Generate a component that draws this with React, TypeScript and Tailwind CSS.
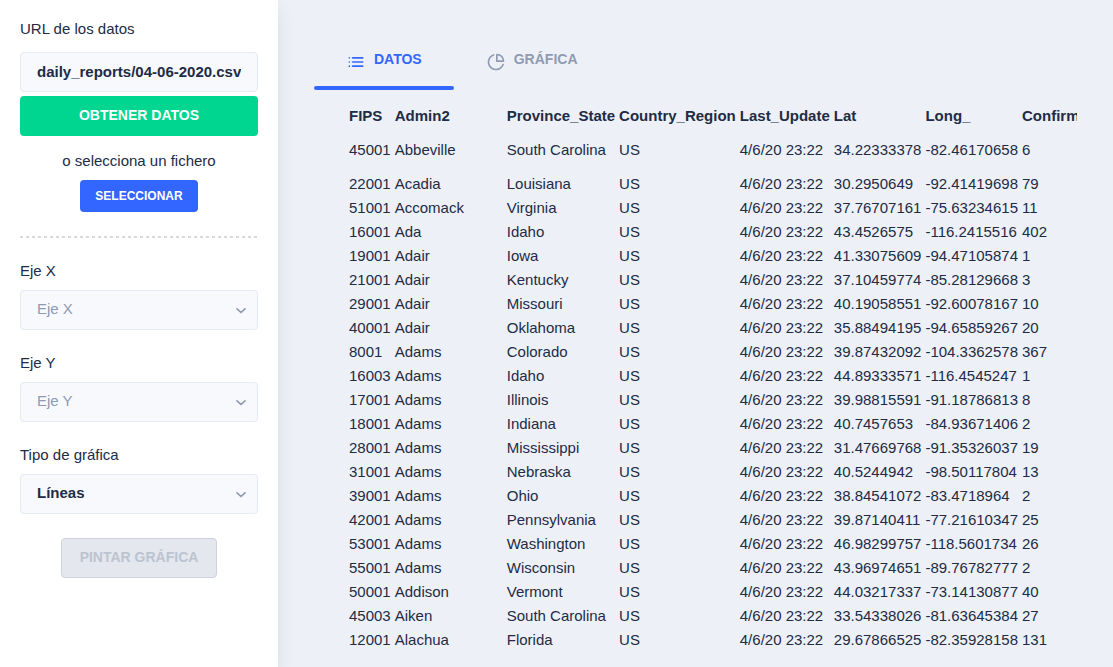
import { useState } from "react";
import type { ReactNode } from "react";

const headers = ["FIPS", "Admin2", "Province_State", "Country_Region", "Last_Update", "Lat", "Long_", "Confirmed"];

const records: string[][] = [
  ["45001", "Abbeville", "South Carolina", "34.22333378", "-82.46170658", "6"],
  ["22001", "Acadia", "Louisiana", "30.2950649", "-92.41419698", "79"],
  ["51001", "Accomack", "Virginia", "37.76707161", "-75.63234615", "11"],
  ["16001", "Ada", "Idaho", "43.4526575", "-116.2415516", "402"],
  ["19001", "Adair", "Iowa", "41.33075609", "-94.47105874", "1"],
  ["21001", "Adair", "Kentucky", "37.10459774", "-85.28129668", "3"],
  ["29001", "Adair", "Missouri", "40.19058551", "-92.60078167", "10"],
  ["40001", "Adair", "Oklahoma", "35.88494195", "-94.65859267", "20"],
  ["8001", "Adams", "Colorado", "39.87432092", "-104.3362578", "367"],
  ["16003", "Adams", "Idaho", "44.89333571", "-116.4545247", "1"],
  ["17001", "Adams", "Illinois", "39.98815591", "-91.18786813", "8"],
  ["18001", "Adams", "Indiana", "40.7457653", "-84.93671406", "2"],
  ["28001", "Adams", "Mississippi", "31.47669768", "-91.35326037", "19"],
  ["31001", "Adams", "Nebraska", "40.5244942", "-98.50117804", "13"],
  ["39001", "Adams", "Ohio", "38.84541072", "-83.4718964", "2"],
  ["42001", "Adams", "Pennsylvania", "39.87140411", "-77.21610347", "25"],
  ["53001", "Adams", "Washington", "46.98299757", "-118.5601734", "26"],
  ["55001", "Adams", "Wisconsin", "43.96974651", "-89.76782777", "2"],
  ["50001", "Addison", "Vermont", "44.03217337", "-73.14130877", "40"],
  ["45003", "Aiken", "South Carolina", "33.54338026", "-81.63645384", "27"],
  ["12001", "Alachua", "Florida", "29.67866525", "-82.35928158", "131"],
];

const rows = records.map(([fips, admin, state, lat, long, confirmed]) => [
  fips,
  admin,
  state,
  "US",
  "4/6/20 23:22",
  lat,
  long,
  confirmed,
]);

function ListIcon() {
  return (
    <svg className="size-5 shrink-0" viewBox="0 0 24 24" fill="currentColor" aria-hidden="true">
      <circle cx="4" cy="7" r="1" />
      <circle cx="4" cy="12" r="1" />
      <circle cx="4" cy="17" r="1" />
      <rect x="7" y="11" width="14" height="2" rx=".94" />
      <rect x="7" y="16" width="14" height="2" rx=".94" />
      <rect x="7" y="6" width="14" height="2" rx=".94" />
    </svg>
  );
}

function PieIcon() {
  return (
    <svg className="size-5 shrink-0" viewBox="0 0 24 24" fill="currentColor" aria-hidden="true">
      <path d="M13 2a1 1 0 0 0-1 1v8a1 1 0 0 0 1 1h8a1 1 0 0 0 1-1 9 9 0 0 0-9-9zm1 8V4.07A7 7 0 0 1 19.93 10z" />
      <path d="M20.82 14.06a1 1 0 0 0-1.28.61A8 8 0 1 1 9.33 4.46a1 1 0 0 0-.66-1.89 10 10 0 1 0 12.76 12.76 1 1 0 0 0-.61-1.27z" />
    </svg>
  );
}

function SelectField({ id, label, muted, options }: { id: string; label: string; muted?: boolean; options: string[] }) {
  return (
    <div className="flex flex-col gap-[9px]">
      <label htmlFor={id}>{label}</label>
      <div className="relative">
        <select
          id={id}
          className={`block h-10 w-full appearance-none rounded border border-[#e4e9f2] bg-[#f7f9fc] pr-10 pb-0.5 pl-4 ${
            muted ? "text-[#8f9bb3]" : "font-bold text-[#222b45]"
          }`}
        >
          {options.map((option) => (
            <option key={option}>{option}</option>
          ))}
        </select>
        <svg
          className="pointer-events-none absolute top-4 right-3 h-[9px] w-2.5 text-[#8f9bb3]"
          viewBox="0 0 10 9"
          fill="none"
          stroke="currentColor"
          strokeWidth="1.7"
          strokeLinecap="round"
          strokeLinejoin="round"
          aria-hidden="true"
        >
          <path d="M1 2.8l4 3.7 4-3.7" />
        </svg>
      </div>
    </div>
  );
}

function Tab({ active, onClick, icon, children }: { active: boolean; onClick: () => void; icon: ReactNode; children: ReactNode }) {
  return (
    <button
      type="button"
      role="tab"
      aria-selected={active}
      onClick={onClick}
      className={`flex flex-col ${active ? "text-[#3366ff]" : "text-[#8f9bb3]"}`}
    >
      <span className="flex items-start gap-2 px-8 pb-[14px] text-sm/[14px] font-bold">
        {icon}
        {children}
      </span>
      <span className={`h-1 w-full rounded ${active ? "bg-[#3366ff]" : ""}`} />
    </button>
  );
}

export default function App() {
  const [url, setUrl] = useState("daily_reports/04-06-2020.csv");
  const [tab, setTab] = useState("datos");

  return (
    <div className="flex h-screen overflow-hidden bg-[#edf1f7] font-['Liberation_Sans',Arial,sans-serif] text-[15px]/[20px] text-[#222b45]">
      <aside className="z-10 w-[278px] shrink-0 bg-white px-5 pt-[19px] shadow-[0_8px_16px_0_rgba(44,51,73,0.1)]">
        <label htmlFor="url" className="block">
          URL de los datos
        </label>
        <input
          id="url"
          type="text"
          value={url}
          onChange={(event) => setUrl(event.target.value)}
          className="mt-[13px] block h-10 w-full rounded border border-[#e4e9f2] bg-[#f7f9fc] px-4 pb-0.5 font-bold"
        />
        <button type="button" className="mt-1 h-10 w-full rounded bg-[#00d68f] pb-0.5 text-sm font-bold text-white">
          OBTENER DATOS
        </button>
        <div className="mt-[15px] flex flex-col items-center gap-[9px]">
          <p>o selecciona un fichero</p>
          <button type="button" className="h-8 rounded bg-[#3366ff] px-[15px] text-xs font-bold text-white">
            SELECCIONAR
          </button>
        </div>
        <div className="mt-6 h-0.5 bg-[repeating-linear-gradient(90deg,#d9d9d9_0_3px,transparent_3px_6px)]" />
        <form className="mt-[23px] flex flex-col gap-6" onSubmit={(event) => event.preventDefault()}>
          <div className="flex flex-col gap-[23px]">
            <SelectField id="eje-x" label="Eje X" muted options={["Eje X"]} />
            <SelectField id="eje-y" label="Eje Y" muted options={["Eje Y"]} />
            <SelectField id="tipo" label="Tipo de gráfica" options={["Líneas"]} />
          </div>
          <button
            type="submit"
            disabled
            className="h-10 self-center rounded border border-[#cdd2dc] bg-[#e4e7ed] px-[18px] pb-0.5 text-sm font-bold text-[#bcc3d1]"
          >
            PINTAR GRÁFICA
          </button>
        </form>
      </aside>

      <main className="min-w-0 flex-1 px-9 pt-[52px]">
        <div role="tablist" className="flex">
          <Tab active={tab === "datos"} onClick={() => setTab("datos")} icon={<ListIcon />}>
            DATOS
          </Tab>
          <Tab active={tab === "grafica"} onClick={() => setTab("grafica")} icon={<PieIcon />}>
            GRÁFICA
          </Tab>
        </div>
        <div className="overflow-hidden pt-[13px] pl-8">
          <table className="border-separate border-spacing-0.5 text-left whitespace-nowrap">
            <thead>
              <tr>
                {headers.map((header) => (
                  <th key={header} scope="col" className={`p-px font-bold ${header === "Admin2" ? "min-w-[110px]" : ""}`}>
                    {header}
                  </th>
                ))}
              </tr>
            </thead>
            <tbody>
              {rows.map((row, index) => (
                <tr key={row[0]}>
                  {row.map((cell, column) => (
                    <td key={headers[column]} className={index === 0 ? "px-px py-[11px]" : "p-px"}>
                      {cell}
                    </td>
                  ))}
                </tr>
              ))}
            </tbody>
          </table>
        </div>
      </main>
    </div>
  );
}
